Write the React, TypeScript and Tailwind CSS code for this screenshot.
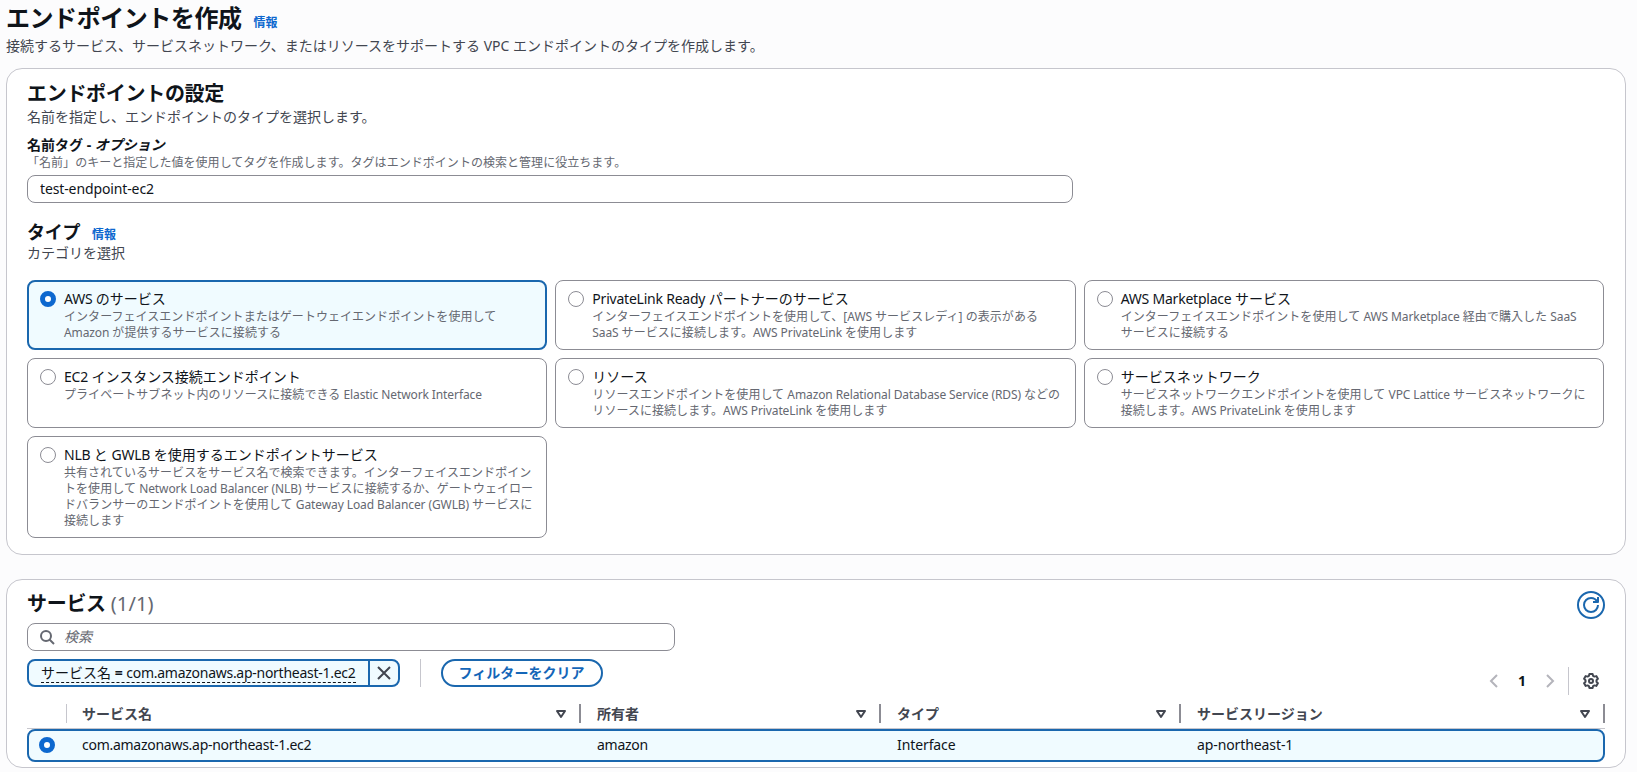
import React, { useState } from "react";

type ServiceType = {
    id: string;
    title: string;
    description: string;
};

const serviceTypes: ServiceType[] = [
    {
        id: "aws",
        title: "AWS のサービス",
        description: "インターフェイスエンドポイントまたはゲートウェイエンドポイントを使用して Amazon が提供するサービスに接続する",
    },
    {
        id: "partner",
        title: "PrivateLink Ready パートナーのサービス",
        description: "インターフェイスエンドポイントを使用して、[AWS サービスレディ] の表示がある SaaS サービスに接続します。AWS PrivateLink を使用します",
    },
    {
        id: "marketplace",
        title: "AWS Marketplace サービス",
        description: "インターフェイスエンドポイントを使用して AWS Marketplace 経由で購入した SaaS サービスに接続する",
    },
    {
        id: "ec2",
        title: "EC2 インスタンス接続エンドポイント",
        description: "プライベートサブネット内のリソースに接続できる Elastic Network Interface",
    },
    {
        id: "resource",
        title: "リソース",
        description: "リソースエンドポイントを使用して Amazon Relational Database Service (RDS) などのリソースに接続します。AWS PrivateLink を使用します",
    },
    {
        id: "network",
        title: "サービスネットワーク",
        description: "サービスネットワークエンドポイントを使用して VPC Lattice サービスネットワークに接続します。AWS PrivateLink を使用します",
    },
    {
        id: "nlb",
        title: "NLB と GWLB を使用するエンドポイントサービス",
        description: "共有されているサービスをサービス名で検索できます。インターフェイスエンドポイントを使用して Network Load Balancer (NLB) サービスに接続するか、ゲートウェイロードバランサーのエンドポイントを使用して Gateway Load Balancer (GWLB) サービスに接続します",
    },
];

const columns = ["サービス名", "所有者", "タイプ", "サービスリージョン"];
const row = ["com.amazonaws.ap-northeast-1.ec2", "amazon", "Interface", "ap-northeast-1"];

// Latin words are set a little tighter than the Japanese around them
const MixedText = ({ text, latin }: { text: string; latin: string }) => (
    <>
        {text.split(/([A-Za-z][A-Za-z0-9 ()]*)/).map((part, i) =>
            i % 2 === 1 ? (
                <span key={i} className={latin}>
                    {part}
                </span>
            ) : (
                part
            )
        )}
    </>
);

const Radio = ({ checked }: { checked: boolean }) => (
    <span
        className={
            checked
                ? "block size-4 shrink-0 rounded-full border-5 border-[#0d68cf] bg-white"
                : "block size-4 shrink-0 rounded-full border border-[#8c8c94] bg-white"
        }
    />
);

const InfoLink = () => (
    <a className="text-xs font-bold text-[#0d68cf]" href="#">
        情報
    </a>
);

const TypeCard = ({ item, checked, onSelect }: { item: ServiceType; checked: boolean; onSelect: () => void }) => (
    <div
        onClick={onSelect}
        className={
            checked
                ? "flex gap-2 rounded-lg border-2 border-[#1a67ae] bg-[#f0fbff] px-[11px] py-[7px]"
                : "flex gap-2 rounded-lg border border-[#8c8c94] px-3 py-2"
        }
    >
        <div className="pt-0.5">
            <Radio checked={checked} />
        </div>
        <div className="min-w-0 flex-1">
            <div className="text-sm leading-5">
                <MixedText text={item.title} latin="tracking-[-0.22px]" />
            </div>
            <div className="pr-px text-xs leading-4 tracking-[0.05px] text-[#656871]">
                <MixedText text={item.description} latin="tracking-[-0.1px]" />
            </div>
        </div>
    </div>
);

const App = () => {
    const [selected, setSelected] = useState("aws");

    return (
        <div className="h-[772px] overflow-hidden bg-[#fcfcfd] pl-1.5 font-['Noto_Sans','Noto_Sans_CJK_JP',sans-serif] text-sm text-[#0f141a]">
            <header className="h-[68px] pt-[3px]">
                <div className="flex items-baseline gap-3">
                    <h1 className="text-2xl leading-[30px] font-bold tracking-[-0.45px]">エンドポイントを作成</h1>
                    <InfoLink />
                </div>
                <p className="mt-[3px] leading-5 text-[#424650]">
                    接続するサービス、サービスネットワーク、またはリソースをサポートする VPC エンドポイントのタイプを作成します。
                </p>
            </header>

            <section className="h-[487px] w-[1620px] rounded-2xl border border-[#c6c6cd] bg-white px-5 pt-[13px]">
                <h2 className="text-xl leading-6 font-bold tracking-[-0.3px]">エンドポイントの設定</h2>
                <p className="mt-px leading-5 text-[#424650]">名前を指定し、エンドポイントのタイプを選択します。</p>

                <div className="mt-2 leading-5 font-bold">
                    名前タグ - <i>オプション</i>
                </div>
                <div className="text-xs leading-4 tracking-[0.04px] text-[#656871]">
                    「名前」のキーと指定した値を使用してタグを作成します。タグはエンドポイントの検索と管理に役立ちます。
                </div>
                <input
                    className="mt-1 block h-7 w-[1046px] rounded-lg border border-[#8c8c94] bg-white px-3 pb-0.5 leading-5 tracking-[-0.12px]"
                    defaultValue="test-endpoint-ec2"
                />

                <div className="mt-[18px] flex items-baseline gap-3">
                    <h3 className="text-lg leading-[22px] font-bold tracking-[-0.3px]">タイプ</h3>
                    <InfoLink />
                </div>
                <p className="leading-5 text-[#424650]">カテゴリを選択</p>

                <div className="mt-[17px] mr-px grid grid-cols-3 gap-2">
                    {serviceTypes.map((item) => (
                        <TypeCard
                            key={item.id}
                            item={item}
                            checked={selected === item.id}
                            onSelect={() => setSelected(item.id)}
                        />
                    ))}
                </div>
            </section>

            <section className="mt-6 h-[189px] w-[1620px] rounded-2xl border border-[#c6c6cd] bg-white px-5 pt-[11px]">
                <div className="flex items-center justify-between">
                    <h2 className="pb-0.5 text-xl leading-6 font-bold tracking-[-0.3px]">
                        サービス <span className="font-normal tracking-[0.15px] text-[#656871]">(1/1)</span>
                    </h2>
                    <button className="flex size-7 items-center justify-center rounded-full border-2 border-[#1a67ae] text-[#1a67ae]">
                        <svg className="size-4" viewBox="0 0 16 16" fill="none" stroke="currentColor" strokeWidth="2">
                            <path d="M15 8c0 3.87-3.13 7-7 7s-7-3.13-7-7 3.13-7 7-7c2.79 0 5.2 1.63 6.33 4" />
                            <path d="M10 5h5V0" strokeLinejoin="round" />
                        </svg>
                    </button>
                </div>

                <div className="mt-1 flex h-7 w-[648px] items-center gap-[9px] rounded-lg border border-[#8c8c94] px-[11px]">
                    <svg className="size-4 text-[#656871]" viewBox="0 0 16 16" fill="none" stroke="currentColor" strokeWidth="2">
                        <circle cx="7" cy="7" r="5" />
                        <path d="m15 15-4.5-4.5" />
                    </svg>
                    <span className="text-[#656871] italic">検索</span>
                </div>

                <div className="mt-2 flex justify-between">
                    <div className="flex h-7 items-center">
                        <div className="flex h-7 rounded-lg border-2 border-[#1a67ae] bg-[#f0fbff]">
                            <span className="flex items-center border-r-2 border-[#1a67ae] px-3">
                                <span className="border-b border-dashed border-[#0f141a] leading-[18px]">
                                    サービス名 <b>=</b> <span className="tracking-[-0.27px]">com.amazonaws.ap-northeast-1.ec2</span>
                                </span>
                            </span>
                            <button className="flex w-7 items-center justify-center text-[#424650]">
                                <svg className="size-4" viewBox="0 0 16 16" fill="none" stroke="currentColor" strokeWidth="2">
                                    <path d="m2 2 12 12M14 2 2 14" />
                                </svg>
                            </button>
                        </div>
                        <div className="mx-5 h-7 w-px bg-[#c6c6cd]" />
                        <button className="h-7 rounded-full border-2 border-[#1a67ae] px-4 leading-5 font-bold tracking-[0.05px] text-[#1466b8]">
                            フィルターをクリア
                        </button>
                    </div>
                    <div className="mt-2 flex h-7 items-center pr-1.5">
                        <svg className="size-4 text-[#b4b4bb]" viewBox="0 0 16 16" fill="none" stroke="currentColor" strokeWidth="2">
                            <path d="M11 2 5 8l6 6" />
                        </svg>
                        <span className="w-10 text-center font-bold">1</span>
                        <svg className="size-4 text-[#b4b4bb]" viewBox="0 0 16 16" fill="none" stroke="currentColor" strokeWidth="2">
                            <path d="m5 2 6 6-6 6" />
                        </svg>
                        <div className="mr-3.5 ml-2.5 h-7 w-px bg-[#c6c6cd]" />
                        <svg className="size-4 text-[#424650]" viewBox="0 0 16 16" fill="none" stroke="currentColor" strokeWidth="2" strokeLinejoin="round">
                            <path d="M6.400 1h3.200l.5 1.900 1.300.7 1.900-.5 1.600 2.700L13.500 7.200v1.600l1.400 1.400-1.600 2.700-1.900-.5-1.300.7-.5 1.900H6.400l-.5-1.900-1.300-.7-1.900.5-1.600-2.700 1.400-1.400V7.200L1.100 5.800l1.600-2.700 1.900.5 1.300-.7z" />
                            <circle cx="8" cy="8" r="2" />
                        </svg>
                    </div>
                </div>

                <div className="grid grid-cols-[40px_514px_300px_300px_424px] border-b border-[#c6c6cd] pt-[9px] pb-[5px] font-bold text-[#424650]">
                    <div className="h-[19px] border-r border-[#c6c6cd]" />
                    {columns.map((name) => (
                        <div key={name} className="flex h-[19px] items-center justify-between border-r-2 border-[#8c8c94] pr-3 pl-4 first-of-type:pl-0 nth-2:pl-[15px]">
                            <span>{name}</span>
                            <svg className="h-3 w-3" viewBox="0 0 12 12" fill="none" stroke="currentColor" strokeWidth="2" strokeLinejoin="round">
                                <path d="M2 3h8L6 9z" />
                            </svg>
                        </div>
                    ))}
                </div>
                <div className="grid h-[33px] grid-cols-[38px_514px_300px_300px_auto] items-center rounded-lg border-2 border-[#1a67ae] bg-[#f0fbff] pb-px">
                    <div className="pl-2.5">
                        <Radio checked />
                    </div>
                    {row.map((value) => (
                        <div key={value} className="pl-4 tracking-[-0.1px] nth-2:pl-[15px] nth-2:tracking-[-0.27px] nth-3:tracking-[-0.27px]">
                            {value}
                        </div>
                    ))}
                </div>
            </section>
        </div>
    );
};

export default App;
